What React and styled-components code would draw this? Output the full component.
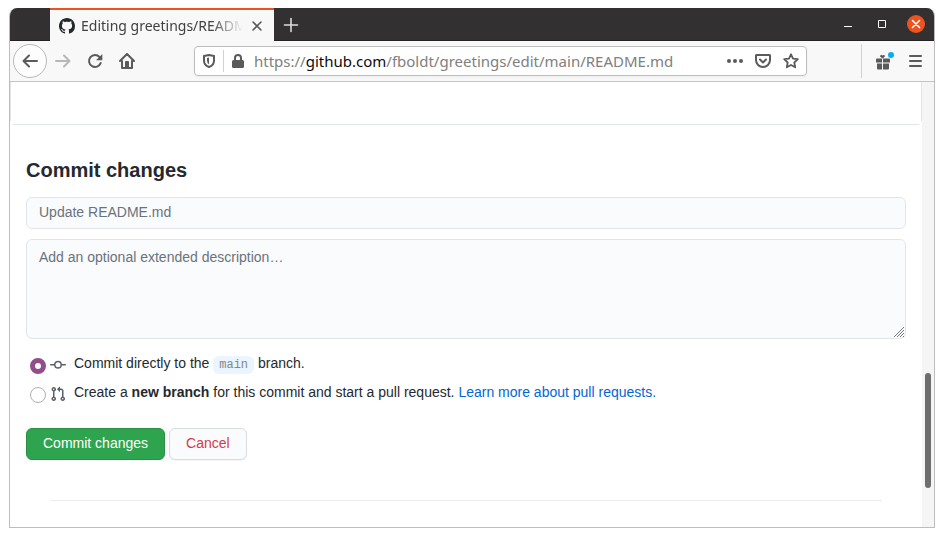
import React from "react";
import styled, { createGlobalStyle, css } from "styled-components";

const uiFont = '"Noto Sans", "Open Sans", sans-serif';
const pageFont = '"Liberation Sans", Arial, sans-serif';

const GlobalStyle = createGlobalStyle`
  *, *::before, *::after { box-sizing: border-box; }
  body { margin: 0; background: #fff; }
  button, input, textarea { font: inherit; margin: 0; }
  svg { display: block; flex: none; }
`;

const BrowserWindow = styled.div`
  display: flex;
  flex-direction: column;
  min-height: calc(100vh - 17px);
  margin: 8px 9px 9px;
  border: 1px solid #bebdbc;
  border-top: 0;
  border-radius: 8px 8px 0 0;
  overflow: hidden;
`;

const TitleBar = styled.header`
  display: flex;
  height: 33px;
  padding: 0 9px 0 40px;
  background: #333031;
  border-bottom: 1px solid #242223;
`;

const Tab = styled.div`
  display: flex;
  align-items: center;
  flex: none;
  width: 224px;
  height: 33px;
  padding: 0 9px;
  gap: 6px;
  background: #f8f8f8;
  border-top: 2px solid #e95420;
  font: 14px/20px ${uiFont};
  color: #404040;
`;

const TabTitle = styled.span`
  flex: 1;
  min-width: 0;
  overflow: hidden;
  white-space: nowrap;
  mask-image: linear-gradient(to right, #000 calc(100% - 32px), transparent);
`;

const BareButton = styled.button`
  display: flex;
  align-items: center;
  justify-content: center;
  flex: none;
  width: ${(p) => p.$width || 32}px;
  height: ${(p) => p.$height || 32}px;
  padding: 0;
  border: 0;
  background: none;
  color: ${(p) => p.$color || "#5a5a5a"};
`;

const WindowControls = styled.div`
  display: flex;
  align-items: center;
  gap: 2px;
  margin-left: auto;
`;

const CloseWindow = styled(BareButton)`
  border-radius: 50%;
  background: #e95420;
  margin-left: 7px;
`;

const Toolbar = styled.nav`
  display: flex;
  align-items: center;
  height: 41px;
  padding: 0 6px 0 3px;
  background: #f8f8f8;
  border-bottom: 1px solid #c4c4c4;
`;

const BackButton = styled(BareButton)`
  border: 1px solid #b9b9b9;
  border-radius: 50%;
  background: #fdfdfd;
`;

const AddressBar = styled.div`
  display: flex;
  align-items: center;
  flex: 1;
  min-width: 0;
  height: 30px;
  margin: 0 54px 0 51px;
  padding-right: 1px;
  background: #fff;
  border: 1px solid #bebebe;
  border-radius: 4px;
  box-shadow: 0 1px 3px #0000000d;
`;

const Divider = styled.span`
  flex: none;
  width: 1px;
  height: ${(p) => p.$height}px;
  background: #d2d2d2;
`;

const Address = styled.a`
  flex: 1;
  min-width: 0;
  margin-left: 2px;
  overflow: hidden;
  white-space: nowrap;
  font: 15px/22px ${uiFont};
  color: #808080;
  text-decoration: none;
`;

const Host = styled.span`
  color: #0c0c0d;
`;

const Viewport = styled.div`
  display: flex;
  flex: 1;
  background: #fff;
`;

const Page = styled.main`
  flex: 1;
  min-width: 0;
  font: 14px/21px ${pageFont};
  color: #24292e;
`;

const EditorEnd = styled.div`
  height: 39px;
  border: 1px solid #e1e4e8;
  border-width: 0 1px;
`;

const EditorRule = styled.div`
  height: 1px;
  margin: 3px 3px 0;
  background: #e1e4e8;
`;

const CommitForm = styled.form`
  display: flex;
  flex-direction: column;
  padding: 30px 16px 40px;
`;

const Heading = styled.h1`
  margin: 0 0 12px;
  font-size: 20px;
  line-height: 30px;
  font-weight: 700;
`;

const field = css`
  width: 100%;
  padding: 5px 12px;
  background: #fafbfc;
  border: 1px solid #e1e4e8;
  border-radius: 6px;
  color: #24292e;
  outline: 0;
  &::placeholder { color: #6a737d; opacity: 1; }
`;

const Summary = styled.input`
  ${field}
  height: 32px;
  padding-bottom: 7px;
  margin-bottom: 10px;
`;

const Description = styled.textarea`
  ${field}
  display: block;
  height: 100px;
  padding-top: 7px;
  resize: vertical;
  &::-webkit-resizer { background: transparent; }
`;

const DescriptionBox = styled.div`
  position: relative;
  margin-bottom: 14px;
`;

const Grip = styled.svg`
  position: absolute;
  right: 1px;
  bottom: 1px;
  pointer-events: none;
`;

const Choice = styled.label`
  display: flex;
  align-items: center;
  height: 21px;
  padding-left: 4px;
  margin-bottom: 8px;
  white-space: nowrap;
`;

const Radio = styled.input`
  appearance: none;
  flex: none;
  align-self: flex-start;
  width: 16px;
  height: 16px;
  margin-top: 5px;
  border: 1px solid #b0b0b0;
  border-radius: 50%;
  background: #fff;
  &:checked {
    border: 5px solid #924d8b;
  }
`;

const ChoiceIcon = styled.svg`
  margin: 2px 8px 0 4px;
  fill: #586069;
`;

const Branch = styled.code`
  display: inline-block;
  padding: 0 6px;
  border-radius: 6px;
  background: #eaf5ff;
  color: #808890;
  font: 12px/18px "Liberation Mono", monospace;
`;

const Link = styled.a`
  color: #0366d6;
  text-decoration: none;
`;

const Actions = styled.div`
  display: flex;
  gap: 4px;
  margin-top: 17px;
`;

const Button = styled.button`
  height: 32px;
  padding: 0 16px 2px;
  border: 1px solid ${(p) => (p.$primary ? "#2a8f47" : "#d9dbdd")};
  border-radius: 6px;
  background: ${(p) => (p.$primary ? "#2ea44f" : "#fafbfc")};
  color: ${(p) => (p.$primary ? "#fff" : "#d73a49")};
  box-shadow: 0 1px 0 #1b1f230a;
`;

const FooterRule = styled.hr`
  height: 1px;
  margin: 0 40px;
  border: 0;
  background: #eaecef;
`;

const ScrollTrack = styled.div`
  display: flex;
  flex-direction: column;
  align-items: center;
  flex: 0 0 12px;
  background: #f5f5f5;
  &::before { content: ""; flex: 291 0 0; }
  &::after { content: ""; flex: 39 0 0; }
`;

const ScrollThumb = styled.div`
  flex: 115 0 0;
  width: 6px;
  border-radius: 3px;
  background: #6e6e6e;
`;

const Stroke = ({ size = 16, width = 2, children }) => (
  <svg width={size} height={size} viewBox="0 0 16 16" fill="none" stroke="currentColor" strokeWidth={width} strokeLinecap="round" strokeLinejoin="round">
    {children}
  </svg>
);

const GithubMark = () => (
  <svg width="16" height="16" viewBox="0 0 16 16" fill="#24292e">
    <path d="M8 0C3.58 0 0 3.58 0 8c0 3.54 2.29 6.53 5.47 7.59.4.07.55-.17.55-.38 0-.19-.01-.82-.01-1.49-2.01.37-2.53-.49-2.69-.94-.09-.23-.48-.94-.82-1.13-.28-.15-.68-.52-.01-.53.63-.01 1.08.58 1.23.82.72 1.21 1.87.87 2.33.66.07-.52.28-.87.51-1.07-1.78-.2-3.64-.89-3.64-3.95 0-.87.31-1.59.82-2.15-.08-.2-.36-1.02.08-2.12 0 0 .67-.21 2.2.82.64-.18 1.32-.27 2-.27s1.36.09 2 .27c1.53-1.04 2.2-.82 2.2-.82.44 1.1.16 1.92.08 2.12.51.56.82 1.27.82 2.15 0 3.07-1.87 3.75-3.65 3.95.29.25.54.73.54 1.48 0 1.07-.01 1.93-.01 2.2 0 .21.15.46.55.38A8.01 8.01 0 0 0 16 8c0-4.42-3.58-8-8-8z" />
  </svg>
);

export default function App() {
  return (
    <>
      <GlobalStyle />
      <BrowserWindow>
        <TitleBar>
          <Tab>
            <GithubMark />
            <TabTitle>Editing greetings/README.md</TabTitle>
            <BareButton $width={16} $height={20} aria-label="Close tab">
              <Stroke width={1.6}><path d="M4 4l8 8M12 4l-8 8" /></Stroke>
            </BareButton>
          </Tab>
          <BareButton $width={34} $height={33} $color="#deddda" aria-label="New tab">
            <Stroke width={1.6}><path d="M8 1.5v13M1.5 8h13" /></Stroke>
          </BareButton>
          <WindowControls>
            <BareButton $height={24} $color="#fff" aria-label="Minimize">
              <svg width="16" height="16"><path d="M4 10.5h8" stroke="currentColor" /></svg>
            </BareButton>
            <BareButton $height={24} $color="#fff" aria-label="Maximize">
              <svg width="16" height="16"><path d="M4.5 4.5h7v7h-7z" stroke="currentColor" fill="none" /></svg>
            </BareButton>
            <CloseWindow $width={18} $height={18} $color="#fff" aria-label="Close window">
              <Stroke width={1.5}><path d="M4.5 4.5l7 7M11.5 4.5l-7 7" /></Stroke>
            </CloseWindow>
          </WindowControls>
        </TitleBar>

        <Toolbar>
          <BackButton $width={34} $height={34} aria-label="Back">
            <Stroke><path d="M15 8H1.5M7 2.5L1.5 8 7 13.5" /></Stroke>
          </BackButton>
          <BareButton $color="#b7b7b7" aria-label="Forward">
            <Stroke><path d="M1 8h13.5M9 2.5L14.5 8 9 13.5" /></Stroke>
          </BareButton>
          <BareButton aria-label="Reload">
            <svg width="16" height="16" viewBox="0 0 16 16" fill="none" stroke="currentColor" strokeWidth="2">
              <path d="M12.6 4.1A6 6 0 1 0 13.7 10" strokeLinecap="round" />
              <path d="M15.3 1v6.2H9z" fill="currentColor" stroke="none" />
            </svg>
          </BareButton>
          <BareButton aria-label="Home">
            <svg width="16" height="16" viewBox="0 0 16 16" fill="none" stroke="currentColor" strokeWidth="2" strokeLinecap="round" strokeLinejoin="round">
              <path d="M1 8l7-7 7 7M3 8v7h10V8" />
              <path d="M6 14V9a1 1 0 0 1 1-1h2a1 1 0 0 1 1 1v5z" fill="currentColor" stroke="none" />
            </svg>
          </BareButton>
          <AddressBar>
            <BareButton $width={28} $height={28} aria-label="Tracking protection">
              <svg width="14" height="16" viewBox="0 0 14 16">
                <path d="M7 2L12 3V7.500C12 10.500 10 13 7 14C4 13 2 10.500 2 7.500V3Z" fill="none" stroke="currentColor" strokeWidth="2" strokeLinejoin="round" />
                <path d="M7 4.500L5 5v2.500Q5 10 7 11.400z" fill="currentColor" />
              </svg>
            </BareButton>
            <Divider $height={22} />
            <BareButton $width={28} $height={28} aria-label="Site information">
              <svg width="14" height="16" viewBox="0 0 14 16">
                <rect x="1" y="7" width="12" height="8" rx="1.500" fill="currentColor" />
                <path d="M4 8V5a3 3 0 0 1 6 0v3" fill="none" stroke="currentColor" strokeWidth="2" />
              </svg>
            </BareButton>
            <Address href="https://github.com/fboldt/greetings/edit/main/README.md">
              https://<Host>github.com</Host>/fboldt/greetings/edit/main/README.md
            </Address>
            <BareButton $width={28} $height={28} aria-label="Page actions">
              <svg width="16" height="16" viewBox="0 0 16 16" fill="currentColor">
                <circle cx="2" cy="8" r="2" /><circle cx="8" cy="8" r="2" /><circle cx="14" cy="8" r="2" />
              </svg>
            </BareButton>
            <BareButton $width={28} $height={28} aria-label="Save to Pocket">
              <Stroke><path d="M1.500 2h13a.5.5 0 0 1 .5.5V7a7 7 0 0 1-14 0V2.500a.5.5 0 0 1 .5-.5zM5 6.500l3 3 3-3" /></Stroke>
            </BareButton>
            <BareButton $width={28} $height={28} aria-label="Bookmark this page">
              <Stroke width={1.8}><path d="M8 1.300l2 4.300 4.800.6-3.500 3.300.9 4.800L8 12l-4.200 2.300.9-4.800L1.200 6.200 6 5.600z" /></Stroke>
            </BareButton>
          </AddressBar>
          <Divider $height={34} />
          <BareButton $width={42} aria-label="What's new">
            <svg width="22" height="20" viewBox="0 0 22 20" fill="currentColor">
              <path d="M4 8.500a1 1 0 0 1 1-1h5v4H4zM11 7.500h6a1 1 0 0 1 1 1v3h-7zM5 12.500h5v6H6a1 1 0 0 1-1-1zM11 12.500h6v5a1 1 0 0 1-1 1h-5z" />
              <path d="M10.500 7.500L7.800 5.300 9 3.700l1.500.8 1.500-.8 1.200 1.600z" />
              <circle cx="19" cy="4" r="3" fill="#00b0f4" />
            </svg>
          </BareButton>
          <BareButton $width={24} aria-label="Open menu">
            <Stroke><path d="M2 3h11M2 8h11M2 13h11" /></Stroke>
          </BareButton>
        </Toolbar>

        <Viewport>
          <Page>
            <EditorEnd />
            <EditorRule />
            <CommitForm onSubmit={(e) => e.preventDefault()}>
              <Heading>Commit changes</Heading>
              <Summary aria-label="Commit summary" placeholder="Update README.md" />
              <DescriptionBox>
                <Description aria-label="Commit description" placeholder="Add an optional extended description…" />
                <Grip width="12" height="12" viewBox="0 0 12 12" stroke="#777" strokeWidth="1">
                  <path d="M1 11L11 1M4 11l7-7M7 11l4-4M10 11l1-1" />
                </Grip>
              </DescriptionBox>
              <Choice>
                <Radio type="radio" name="target" defaultChecked />
                <ChoiceIcon width="16" height="16" viewBox="0 0 16 16">
                  <path fillRule="evenodd" d="M10.500 7.750a2.500 2.500 0 1 1-5 0 2.500 2.500 0 0 1 5 0zm1.430.750a4.002 4.002 0 0 1-7.860 0H.750a.750.750 0 1 1 0-1.500h3.320a4.001 4.001 0 0 1 7.860 0h3.320a.750.750 0 1 1 0 1.500h-3.320z" />
                </ChoiceIcon>
                <span>Commit directly to the <Branch>main</Branch> branch.</span>
              </Choice>
              <Choice>
                <Radio type="radio" name="target" />
                <ChoiceIcon width="16" height="16" viewBox="0 0 16 16">
                  <path fillRule="evenodd" d="M7.177 3.073L9.573.677A.25.25 0 0 1 10 .854v4.792a.25.25 0 0 1-.427.177L7.177 3.427a.25.25 0 0 1 0-.354zM3.750 2.500a.75.75 0 1 0 0 1.500.75.75 0 0 0 0-1.500zm-2.250.75a2.250 2.250 0 1 1 3 2.122v5.256a2.251 2.251 0 1 1-1.500 0V5.372A2.250 2.250 0 0 1 1.500 3.250zM11 2.500h-1V4h1a1 1 0 0 1 1 1v5.628a2.251 2.251 0 1 0 1.500 0V5A2.500 2.500 0 0 0 11 2.500zm1 10.250a.75.75 0 1 1 1.500 0 .75.75 0 0 1-1.500 0zM3.750 12a.75.75 0 1 0 0 1.500.75.75 0 0 0 0-1.500z" />
                </ChoiceIcon>
                <span>
                  Create a <b>new branch</b> for this commit and start a pull request.{" "}
                  <Link href="#pull-requests">Learn more about pull requests.</Link>
                </span>
              </Choice>
              <Actions>
                <Button $primary type="submit">Commit changes</Button>
                <Button type="button">Cancel</Button>
              </Actions>
            </CommitForm>
            <FooterRule />
          </Page>
          <ScrollTrack><ScrollThumb /></ScrollTrack>
        </Viewport>
      </BrowserWindow>
    </>
  );
}
